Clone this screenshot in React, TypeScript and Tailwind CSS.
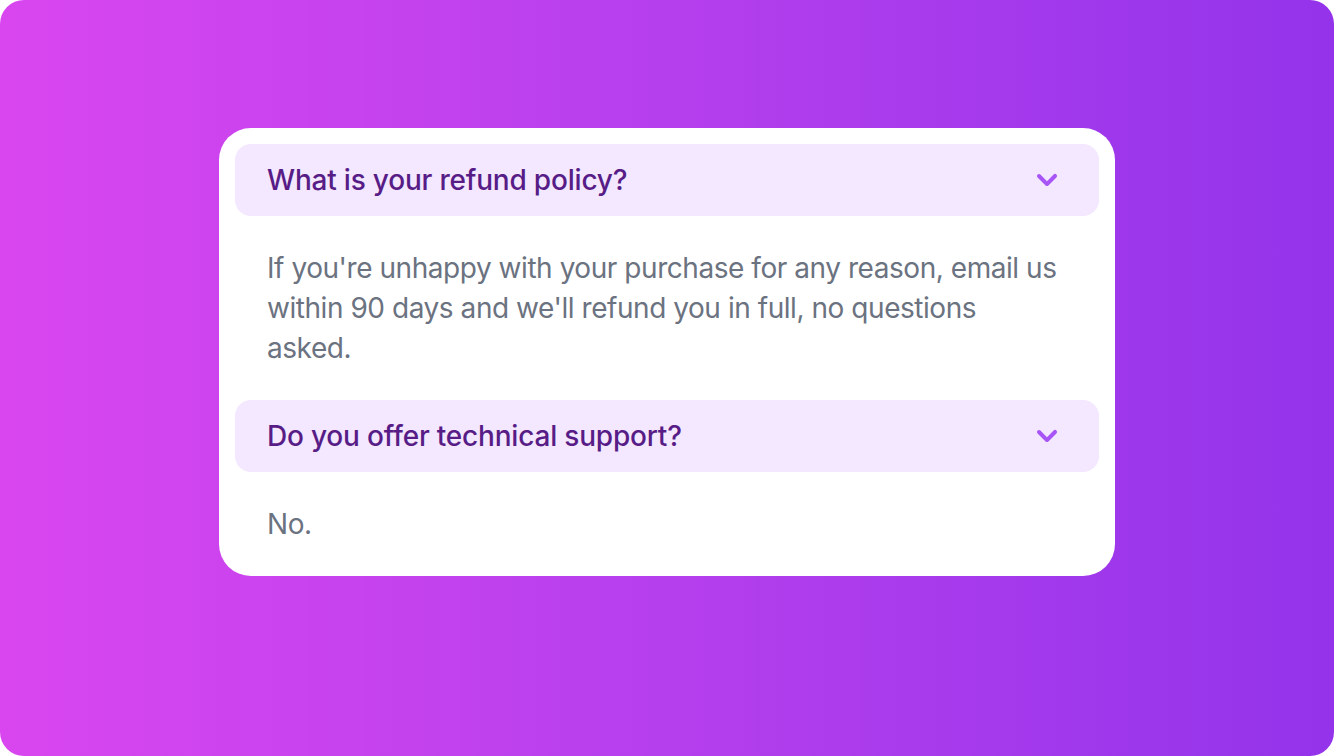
import { useState } from "react";

const FAQS = [
  {
    question: "What is your refund policy?",
    answer:
      "If you're unhappy with your purchase for any reason, email us within 90 days and we'll refund you in full, no questions asked.",
  },
  {
    question: "Do you offer technical support?",
    answer: "No.",
  },
];

function ChevronDown({ open }: { open: boolean }) {
  return (
    <svg
      viewBox="0 0 20 20"
      fill="currentColor"
      className={`h-[40px] w-[40px] text-[#a855f7] ${open ? "" : "rotate-180"}`}
    >
      <path
        fillRule="evenodd"
        d="M5.293 7.293a1 1 0 011.414 0L10 10.586l3.293-3.293a1 1 0 111.414 1.414l-4 4a1 1 0 01-1.414 0l-4-4a1 1 0 010-1.414z"
        clipRule="evenodd"
      />
    </svg>
  );
}

function FaqItem({ question, answer, first }: { question: string; answer: string; first?: boolean }) {
  const [open, setOpen] = useState(true);

  return (
    <div className={first ? "" : "mt-[16px]"}>
      <button
        onClick={() => setOpen(!open)}
        className="flex w-full items-center justify-between rounded-[16px] bg-[#f3e8ff] px-[32px] py-[16px] text-left text-[28px] font-medium leading-[40px] tracking-[-0.2px] text-[#581c87]"
      >
        <span>{question}</span>
        <ChevronDown open={open} />
      </button>
      {open && (
        <div className="px-[32px] pb-[16px] pt-[32px] text-[28px] leading-[40px] tracking-[-0.45px] text-[#6b7280]">
          {answer}
        </div>
      )}
    </div>
  );
}

export default function App() {
  return (
    <div
      className="h-[756px] w-full overflow-hidden rounded-[24px] bg-gradient-to-r from-[#d946ef] to-[#9333ea] px-[32px] pt-[128px]"
      style={{ fontFamily: "Inter, 'Noto Sans', sans-serif" }}
    >
      <div className="mx-auto w-full max-w-[896px] rounded-[32px] bg-white p-[16px]">
        {FAQS.map((faq, i) => (
          <FaqItem key={faq.question} question={faq.question} answer={faq.answer} first={i === 0} />
        ))}
      </div>
    </div>
  );
}
